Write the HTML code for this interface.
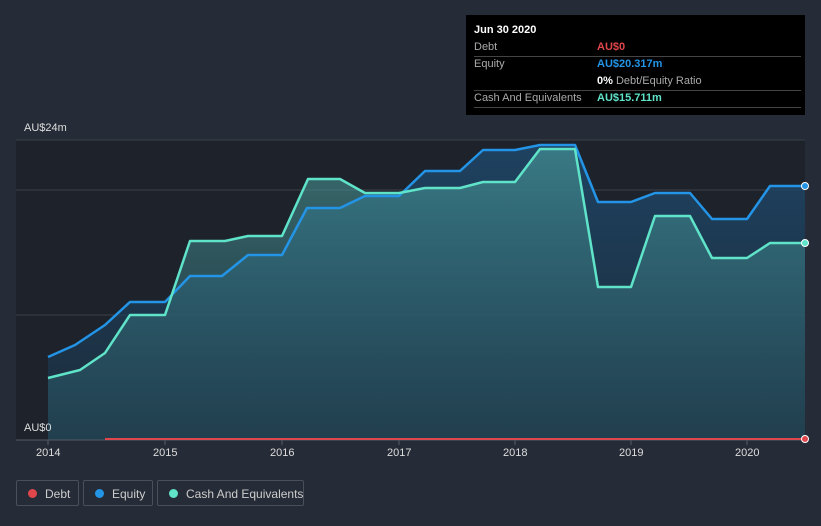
<!DOCTYPE html>
<html><head><style>
html,body{margin:0;width:821px;height:526px;overflow:hidden}
body{background:#262c37;font-family:"Liberation Sans",sans-serif;position:relative}
.tip{position:absolute;left:466px;top:15px;width:339px;height:100px;background:#000;color:#aaa;font-size:11px}
.tip .r{position:absolute;left:8px;width:327px;border-bottom:1px solid #444;height:17px;line-height:17px}
.leg{position:absolute;top:480px;height:26px;border:1px solid #4a505a;border-radius:2px;color:#ccc;font-size:12px;line-height:26px;box-sizing:border-box;white-space:nowrap}
.leg i{position:absolute;left:11px;top:8px;width:9px;height:9px;border-radius:50%}
.leg span{position:absolute;left:28px;white-space:nowrap}
.ax{position:absolute;top:447px;color:#ddd;font-size:11px}
</style></head><body>
<svg width="821" height="526" style="position:absolute;left:0;top:0">
<defs>
<linearGradient id="ce" x1="0" y1="0" x2="0" y2="1"><stop offset="0" stop-color="#1e4a6e" stop-opacity=".8"/><stop offset="1" stop-color="#1c3447" stop-opacity=".6"/></linearGradient>
<linearGradient id="cc" x1="0" y1="0" x2="0" y2="1"><stop offset="0" stop-color="#4fa7a3" stop-opacity=".55"/><stop offset="1" stop-color="#2a6070" stop-opacity=".35"/></linearGradient>
</defs>
<rect x="16" y="140" width="789" height="300" fill="#1d222b"/>
<line x1="16" y1="140" x2="805" y2="140" stroke="#3a404a"/>
<line x1="16" y1="190" x2="805" y2="190" stroke="#3a404a"/>
<line x1="16" y1="315" x2="805" y2="315" stroke="#3a404a"/>
<path d="M48,357 L75,345 105,325 130,302 165,302 190,276 222,276 248,255 282,255 307,208 340,208 365,196 399,196 425,171 460,171 483,150 515,150 540,145 575,145 598,202 631,202 655,193 690,193 712,219 747,219 770,186 805,186 L805,440 48,440Z" fill="url(#ce)"/>
<path d="M48,378 L80,370 105,353 130,315 165,315 190,241 225,241 248,236 282,236 308,179 340,179 365,193 399,193 425,188 460,188 483,182 515,182 540,149 575,149 598,287 631,287 655,216 690,216 712,258 747,258 770,243 805,243 L805,440 48,440Z" fill="url(#cc)"/>
<path d="M48,357 L75,345 105,325 130,302 165,302 190,276 222,276 248,255 282,255 307,208 340,208 365,196 399,196 425,171 460,171 483,150 515,150 540,145 575,145 598,202 631,202 655,193 690,193 712,219 747,219 770,186 805,186" fill="none" stroke="#2394e6" stroke-width="2.5" stroke-linejoin="round"/>
<path d="M48,378 L80,370 105,353 130,315 165,315 190,241 225,241 248,236 282,236 308,179 340,179 365,193 399,193 425,188 460,188 483,182 515,182 540,149 575,149 598,287 631,287 655,216 690,216 712,258 747,258 770,243 805,243" fill="none" stroke="#5fe3c9" stroke-width="2.5" stroke-linejoin="round"/>
<line x1="16" y1="440" x2="805" y2="440" stroke="#555b66"/>
<line x1="105" y1="439" x2="805" y2="439" stroke="#e0474c" stroke-width="2"/>
<circle cx="805" cy="186" r="3.5" fill="#2394e6" stroke="#fff"/>
<circle cx="805" cy="243" r="3.5" fill="#5fe3c9" stroke="#fff"/>
<circle cx="805" cy="439" r="3.5" fill="#e0474c" stroke="#fff"/>
<g stroke="#555b66"><line x1="48" y1="440" x2="48" y2="445"/><line x1="165" y1="440" x2="165" y2="445"/><line x1="282" y1="440" x2="282" y2="445"/><line x1="399" y1="440" x2="399" y2="445"/><line x1="515" y1="440" x2="515" y2="445"/><line x1="631" y1="440" x2="631" y2="445"/><line x1="747" y1="440" x2="747" y2="445"/></g>
</svg>
<div style="position:absolute;left:24px;top:122px;color:#ddd;font-size:11px">AU$24m</div>
<div style="position:absolute;left:24px;top:422px;color:#ddd;font-size:11px">AU$0</div>
<div class="ax" style="left:36px">2014</div><div class="ax" style="left:153px">2015</div><div class="ax" style="left:270px">2016</div><div class="ax" style="left:387px">2017</div><div class="ax" style="left:503px">2018</div><div class="ax" style="left:619px">2019</div><div class="ax" style="left:735px">2020</div>
<div class="tip">
<div style="position:absolute;left:8px;top:9px;color:#fff;font-weight:bold">Jun 30 2020</div>
<div class="r" style="top:24px">Debt<b style="position:absolute;left:123px;color:#e0474c">AU$0</b></div>
<div class="r" style="top:41px;border:none">Equity<b style="position:absolute;left:123px;color:#2394e6">AU$20.317m</b></div>
<div class="r" style="top:58px"><span style="position:absolute;left:123px"><b style="color:#fff">0%</b> Debt/Equity Ratio</span></div>
<div class="r" style="top:75px">Cash And Equivalents<b style="position:absolute;left:123px;color:#5fe3c9">AU$15.711m</b></div>
</div>
<div class="leg" style="left:16px;width:63px"><i style="background:#e0474c"></i><span>Debt</span></div>
<div class="leg" style="left:83px;width:70px"><i style="background:#2394e6"></i><span>Equity</span></div>
<div class="leg" style="left:157px;width:147px"><i style="background:#5fe3c9"></i><span>Cash And Equivalents</span></div>
</body></html>
